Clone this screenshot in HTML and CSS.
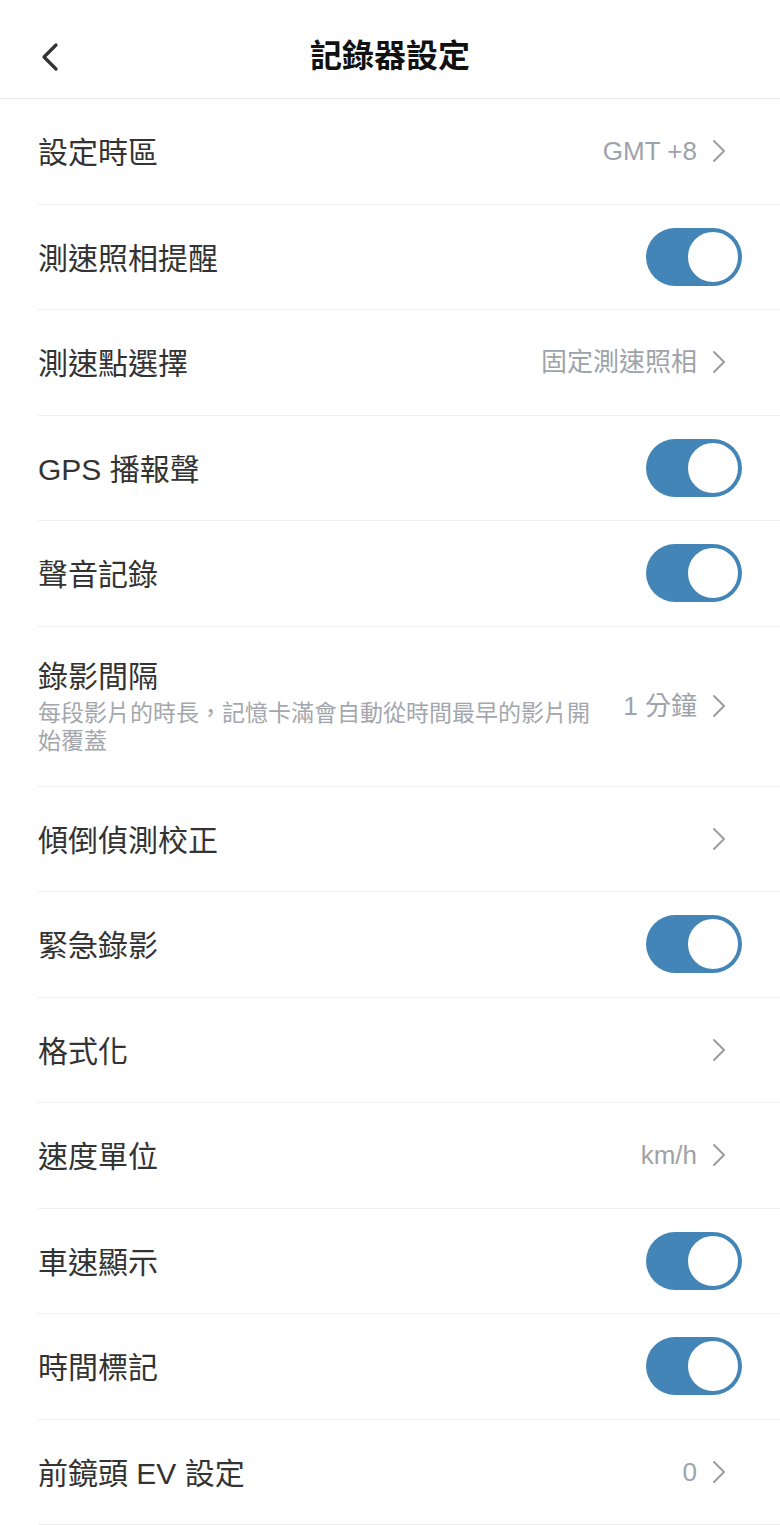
FILE: index.html
```html
<!DOCTYPE html>
<html lang="zh-Hant">
<head>
<meta charset="utf-8">
<title>記錄器設定</title>
<link rel="stylesheet" href="styles.css">
</head>
<body>
<header class="topbar">
  <span class="back"><svg width="20" height="30" viewBox="0 0 20 30"><path d="M16 3 L4 15 L16 27" fill="none" stroke="#333" stroke-width="3.2" stroke-linecap="round" stroke-linejoin="round"/></svg></span>
  <h1 class="title">記錄器設定</h1>
</header>
<ul class="list">
  <li class="row"><span class="label">設定時區</span><span class="right"><span class="value">GMT +8</span><span class="chev"><svg width="14" height="24" viewBox="0 0 14 24"><path d="M2 2 L12 12 L2 22" fill="none" stroke="#9a9da2" stroke-width="2" stroke-linecap="round" stroke-linejoin="round"/></svg></span></span></li>
  <li class="row"><span class="label">測速照相提醒</span><span class="toggle"><span class="knob"></span></span></li>
  <li class="row"><span class="label">測速點選擇</span><span class="right"><span class="value">固定測速照相</span><span class="chev"><svg width="14" height="24" viewBox="0 0 14 24"><path d="M2 2 L12 12 L2 22" fill="none" stroke="#9a9da2" stroke-width="2" stroke-linecap="round" stroke-linejoin="round"/></svg></span></span></li>
  <li class="row"><span class="label">GPS 播報聲</span><span class="toggle"><span class="knob"></span></span></li>
  <li class="row"><span class="label">聲音記錄</span><span class="toggle"><span class="knob"></span></span></li>
  <li class="row tall"><span class="block"><span class="label">錄影間隔</span><span class="sub">每段影片的時長，記憶卡滿會自動從時間最早的影片開始覆蓋</span></span><span class="right"><span class="value">1 分鐘</span><span class="chev"><svg width="14" height="24" viewBox="0 0 14 24"><path d="M2 2 L12 12 L2 22" fill="none" stroke="#9a9da2" stroke-width="2" stroke-linecap="round" stroke-linejoin="round"/></svg></span></span></li>
  <li class="row"><span class="label">傾倒偵測校正</span><span class="right"><span class="chev"><svg width="14" height="24" viewBox="0 0 14 24"><path d="M2 2 L12 12 L2 22" fill="none" stroke="#9a9da2" stroke-width="2" stroke-linecap="round" stroke-linejoin="round"/></svg></span></span></li>
  <li class="row"><span class="label">緊急錄影</span><span class="toggle"><span class="knob"></span></span></li>
  <li class="row"><span class="label">格式化</span><span class="right"><span class="chev"><svg width="14" height="24" viewBox="0 0 14 24"><path d="M2 2 L12 12 L2 22" fill="none" stroke="#9a9da2" stroke-width="2" stroke-linecap="round" stroke-linejoin="round"/></svg></span></span></li>
  <li class="row"><span class="label">速度單位</span><span class="right"><span class="value">km/h</span><span class="chev"><svg width="14" height="24" viewBox="0 0 14 24"><path d="M2 2 L12 12 L2 22" fill="none" stroke="#9a9da2" stroke-width="2" stroke-linecap="round" stroke-linejoin="round"/></svg></span></span></li>
  <li class="row"><span class="label">車速顯示</span><span class="toggle"><span class="knob"></span></span></li>
  <li class="row"><span class="label">時間標記</span><span class="toggle"><span class="knob"></span></span></li>
  <li class="row"><span class="label">前鏡頭 EV 設定</span><span class="right"><span class="value">0</span><span class="chev"><svg width="14" height="24" viewBox="0 0 14 24"><path d="M2 2 L12 12 L2 22" fill="none" stroke="#9a9da2" stroke-width="2" stroke-linecap="round" stroke-linejoin="round"/></svg></span></span></li>
</ul>
</body>
</html>
```
FILE: styles.css
```css
* { box-sizing: border-box; }
html, body { margin: 0; padding: 0; background: #fff; }
body { font-family: "Liberation Sans", "Noto Sans CJK TC", sans-serif; color: #333; }
.topbar {
  position: relative;
  height: 99px;
  border-bottom: 1px solid #ececec;
  display: flex;
  align-items: center;
  justify-content: center;
}
.back { position: absolute; left: 40px; top: 42px; display: flex; }
.title { margin: 0; font-size: 32px; font-weight: 700; color: #111; line-height: 1; margin-top: 14px; }
.list { list-style: none; margin: 0; padding: 0 0 0 38px; }
.row {
  height: 105.5px;
  border-bottom: 1px solid #eeeeee;
  display: flex;
  align-items: center;
  justify-content: space-between;
  padding-right: 38px;
  gap: 24px;
}
.row.tall { height: 160px; }
.label { font-size: 30px; line-height: 36px; color: #333; white-space: nowrap; padding-top: 4px; }
.block { display: flex; flex-direction: column; flex: 1; min-width: 0; }
.block .label { padding-top: 0; }
.sub {
  font-family: "Noto Sans CJK TC", sans-serif;
  font-size: 23px;
  line-height: 28px;
  color: #a3a7ad;
  max-width: 562px;
  margin-top: 2px;
}
.right { display: flex; align-items: center; flex: none; }
.value { font-size: 26px; color: #9ea3aa; line-height: 1; }
.chev { display: flex; margin-left: 15px; margin-right: 16px; }
.toggle {
  position: relative;
  width: 96px;
  height: 58px;
  border-radius: 29px;
  background: #4385b7;
  flex: none;
}
.knob {
  position: absolute;
  right: 2px;
  top: 2px;
  width: 54px;
  height: 54px;
  border-radius: 50%;
  background: #fff;
  border: 2px solid #4385b7;
}
```
